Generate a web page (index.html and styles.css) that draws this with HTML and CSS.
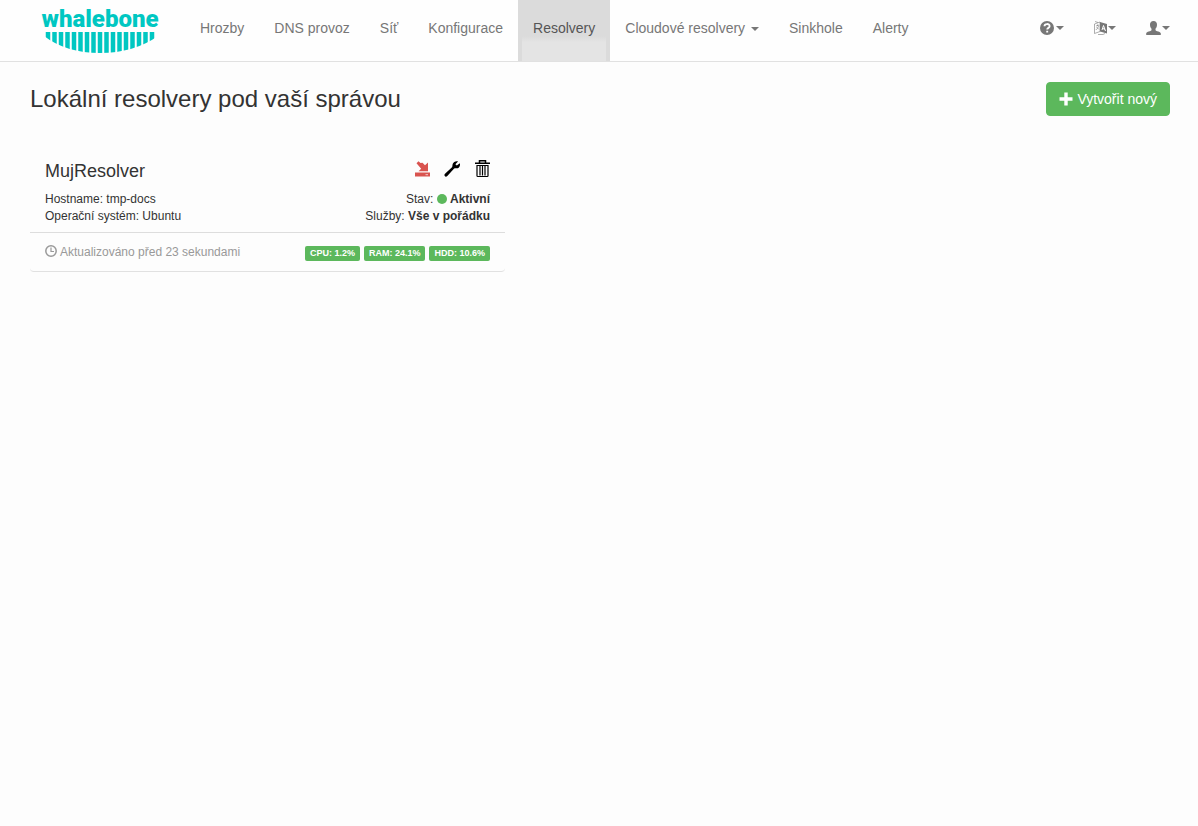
FILE: index.html
```html
<!DOCTYPE html>
<html lang="cs">
<head>
<meta charset="utf-8">
<title>Whalebone – Resolvery</title>
<link rel="stylesheet" href="styles.css">
</head>
<body>
<header class="navbar">
  <a class="brand" href="#" aria-label="whalebone">
    <svg width="120" height="48" viewBox="0 0 120 48">
      <defs><clipPath id="jaw"><path d="M4 25H118V29Q94 46 60 46T4 29Z"/></clipPath></defs>
      <text class="brand-name" x="60" y="20" text-anchor="middle">whalebone</text>
      <path class="brand-bars" clip-path="url(#jaw)" d="M8 24V46M14.500 24V46M21 24V46M27.500 24V46M34 24V46M40.500 24V46M47 24V46M53.500 24V46M60 24V46M66.500 24V46M73 24V46M79.500 24V46M86 24V46M92.500 24V46M99 24V46M105.500 24V46M112 24V46"/>
    </svg>
  </a>
  <nav class="menu">
    <a href="#">Hrozby</a>
    <a href="#">DNS provoz</a>
    <a href="#">Síť</a>
    <a href="#">Konfigurace</a>
    <a class="active" href="#" aria-current="page">Resolvery</a>
    <a href="#">Cloudové resolvery <span class="caret spaced"></span></a>
    <a href="#">Sinkhole</a>
    <a href="#">Alerty</a>
  </nav>
  <div class="tools">
    <button type="button" aria-label="Nápověda">
      <svg width="15" height="14" viewBox="0 0 15 14"><circle cx="7" cy="7" r="7" fill="currentColor"/><path d="M4.500 5.300C4.500 2.400 9.600 2.300 9.600 5.200C9.600 7 7.200 6.800 7.200 8.600M7.200 9.700V11.500" fill="none" stroke="#fff" stroke-width="1.900"/></svg><span class="caret"></span>
    </button>
    <button type="button" aria-label="Jazyk">
      <svg width="13" height="14" viewBox="0 0 13 14"><path d="M6 1L13 3V12.500L6 10.500Z" fill="currentColor"/><path d="M8 9L9.500 4.500L11.500 10M8.500 7.500L11 8.200" fill="none" stroke="#fff"/><path d="M.5 3L6 1V10.500L.5 12.500ZM2 5L5 4M3.500 3.500V5M4.800 4.500Q4 7.500 1.800 9M2.500 6L5 8.500M1 .5L4 1.500M4 13.500H9L11 12.500" fill="none" stroke="currentColor" stroke-width=".6"/></svg><span class="caret"></span>
    </button>
    <button type="button" aria-label="Účet">
      <svg width="15" height="14" viewBox=".5 0 15 14"><path d="M8 0C5.500 0 4.300 1.700 4.500 4C4.600 5.800 5.200 7 6 7.800V9.300C5.500 10.300 1 10.700 .7 12.300V14H15.300V12.300C15 10.700 10.500 10.300 10 9.300V7.800C10.800 7 11.400 5.800 11.500 4C11.700 1.700 10.500 0 8 0Z" fill="currentColor"/></svg><span class="caret"></span>
    </button>
  </div>
</header>
<main class="page">
  <div class="page-head">
    <h1>Lokální resolvery pod vaší správou</h1>
    <button class="create" type="button"><svg width="14" height="14" viewBox="0 0 14 14"><path d="M7 .5V13.500M.5 7H13.500" stroke="currentColor" stroke-width="3.400"/></svg>Vytvořit nový</button>
  </div>
  <section class="card">
    <div class="card-body">
      <div class="row title-row">
        <h2>MujResolver</h2>
        <div class="actions">
          <button class="danger" type="button" aria-label="Aktualizovat"><svg width="16" height="16" viewBox="0 0 16 16"><path d="M1 11.500H16V15.500H1Z" fill="currentColor"/><path d="M2.500 2.200L4.500 .2L6.500 2L8.500 1.800L11 4.200L14 1.500V10.300H4.500L7.200 7.700Z" fill="currentColor"/><path d="M11.500 13.700H14" stroke="#fff" stroke-width=".7"/></svg></button>
          <button type="button" aria-label="Nastavit"><svg width="16" height="16" viewBox="0 0 16 16"><path d="M14 .4L11.400 3.200L12.800 4.600L15.800 2.200C16.600 5 15 7.300 12.500 7.300C11.200 7.300 10.400 7.300 9.700 8L3.300 15C1.500 16.800-.7 14.500 1 12.700L8 6.300C8.500 5.500 8.300 4.500 8.700 3C9.300 .8 12 -.3 14 .4Z" fill="currentColor"/></svg></button>
          <button type="button" aria-label="Smazat"><svg width="16" height="18" viewBox="0 0 16 18"><path d="M5.500 2.500V.8H11.500V2.500M1 3.300H16" fill="none" stroke="currentColor" stroke-width="1.500"/><path d="M2.500 5.500H14.500M3 5V15.700Q3 16.500 3.800 16.500H13.200Q14 16.500 14 15.700V5M6 6V15.500M8.500 6V15.500M11 6V15.500" fill="none" stroke="currentColor" stroke-width="1.200"/></svg></button>
        </div>
      </div>
      <div class="row"><span>Hostname: tmp-docs</span><span>Stav: <span class="dot"></span> <b>Aktivní</b></span></div>
      <div class="row"><span>Operační systém: Ubuntu</span><span>Služby: <b>Vše v pořádku</b></span></div>
    </div>
    <div class="row card-foot">
      <span class="updated"><svg width="12" height="14" viewBox="0 -1 12 14"><circle cx="6" cy="6" r="5.200" fill="none" stroke="currentColor" stroke-width="1.500"/><path d="M6 2.500V6.500H9" fill="none" stroke="currentColor" stroke-width="1.200"/></svg>Aktualizováno před 23 sekundami</span>
      <span class="labels"><span class="label">CPU: 1.2%</span><span class="label">RAM: 24.1%</span><span class="label">HDD: 10.6%</span></span>
    </div>
  </section>
</main>
</body>
</html>
```
FILE: styles.css
```css
* { box-sizing: border-box; }
body {
  margin: 0;
  background: #fdfdfd;
  color: #333;
  font: 14px/20px "Liberation Sans", Arial, sans-serif;
}
button {
  border: 0;
  padding: 0;
  background: none;
  color: inherit;
  font: inherit;
  cursor: pointer;
}
h1, h2 { margin: 0; font-weight: 400; }
h1 { font-size: 24px; line-height: 26px; }
h2 { font-size: 18px; line-height: 20px; }

.navbar {
  display: flex;
  height: 62px;
  border-bottom: 1px solid #e1e1e1;
  background: #fefefe;
  color: #777;
}
.brand { width: 185px; padding: 7px 0 0 40px; }
.brand svg { display: block; overflow: visible; }
.brand-name {
  fill: #00c7c2;
  font: 900 24px Roboto, sans-serif;
}
.brand-bars { fill: none; stroke: #00c7c2; stroke-width: 4.5px; }
.menu { display: flex; }
.menu a {
  padding: 18px 15px 23px;
  color: inherit;
  text-decoration: none;
  white-space: nowrap;
}
.menu .active {
  background: linear-gradient(#dbdbdb, #e4e4e4 6px) bottom / 84px 25px no-repeat #dbdbdb;
  color: #555;
}
.caret {
  display: inline-block;
  border: 4px solid transparent;
  border-top-color: currentColor;
  border-bottom: 0;
  vertical-align: middle;
}
.caret.spaced { margin-left: 2px; }
.tools {
  display: flex;
  gap: 30px;
  margin-left: auto;
  padding: 0 28px 6px 0;
}
.tools button { display: flex; align-items: center; gap: 1px; }

.page { padding: 20px 28px 0 30px; }
.page-head { display: flex; justify-content: space-between; }
.page-head h1 { padding-top: 4px; }
.create {
  display: flex;
  align-items: center;
  gap: 4px;
  height: 34px;
  padding: 0 12px;
  border: 1px solid #5cb85c;
  border-radius: 4px;
  background: #5cb85c;
  color: #fff;
}
.card {
  max-width: 475px;
  margin-top: 30px;
  border-bottom: 1px solid #e1e1e1;
  border-radius: 4px;
  font-size: 12px;
  line-height: 17px;
}
.card-body { padding: 14px 15px 7px; border-bottom: 1px solid #ddd; }
.row { display: flex; justify-content: space-between; }
.title-row { margin-bottom: 10px; }
.title-row h2 { padding-top: 1px; }
.actions { display: flex; gap: 14px; align-items: center; color: #000; height: 18px; }
.actions svg, .create svg, .tools svg { display: block; }
.danger { color: #d9534f; }
.dot {
  display: inline-block;
  width: 10px;
  height: 10px;
  border-radius: 50%;
  background: #5cb85c;
  vertical-align: -1px;
}
.card-foot { align-items: flex-end; padding: 11px 15px 10px; }
.updated { display: flex; align-items: flex-start; gap: 3px; color: #999; }
.labels { display: flex; gap: 4px; }
.label {
  padding: 0 5px;
  border-radius: 2px;
  background: #5cb85c;
  color: #fff;
  font-size: 9px;
  font-weight: 700;
  line-height: 15px;
}
```
